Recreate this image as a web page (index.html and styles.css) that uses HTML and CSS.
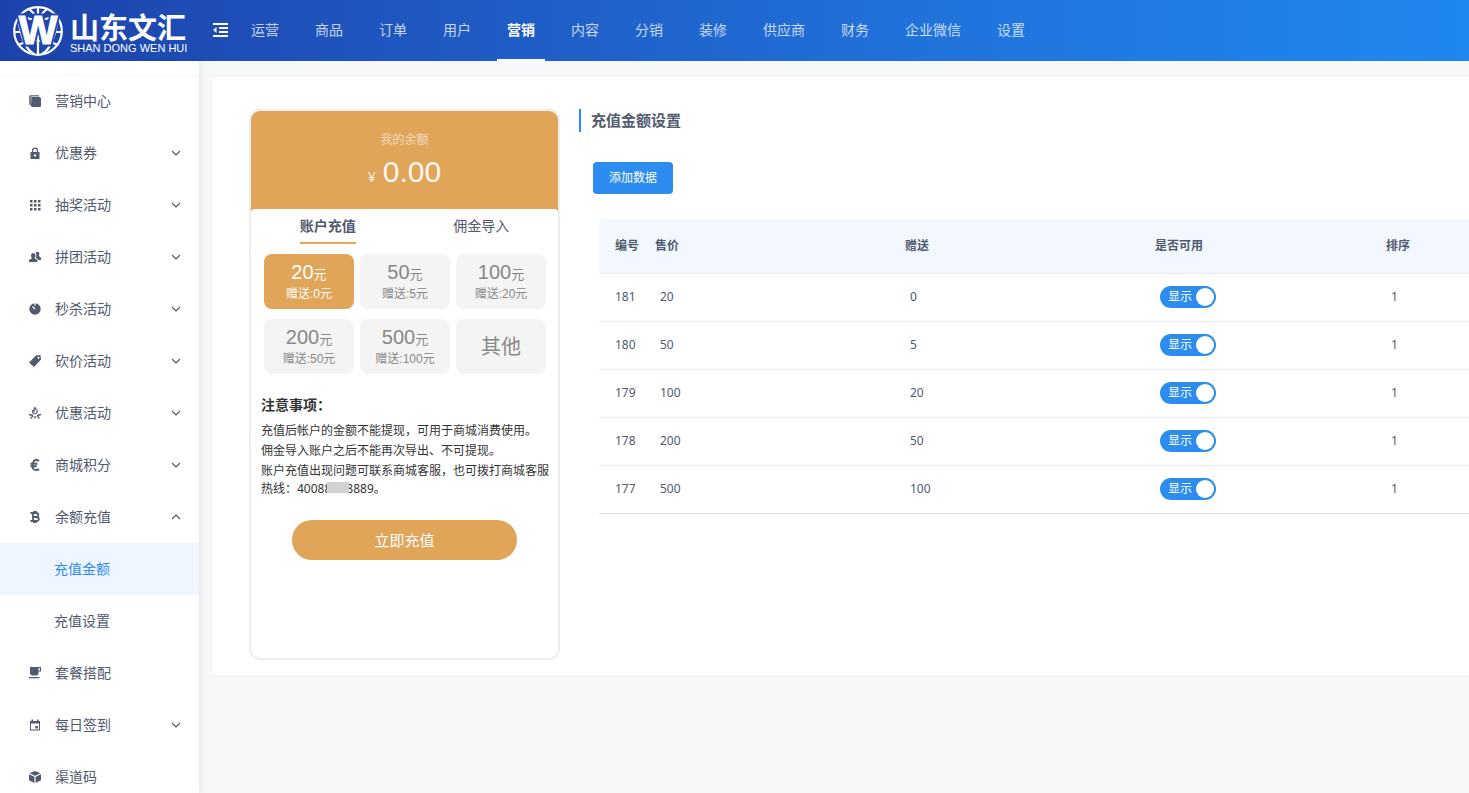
FILE: index.html
```html
<!DOCTYPE html>
<html lang="zh-CN">
<head>
<meta charset="utf-8">
<title>充值金额设置</title>
<link rel="stylesheet" href="styles.css">
</head>
<body>
<header class="topbar">
  <a class="brand" href="#">
    <svg class="brand-mark" viewBox="0 0 50 50" aria-hidden="true">
      <g fill="none" stroke="#fff" stroke-width="2.200">
        <circle cx="25" cy="25" r="23.800"/>
        <path d="M25 1v48M16 3Q22 8 24 12M34 3Q28 8 26 12M7 10q18 7 36 0M1 26h48M6 17Q10 42 21 48M44 17Q40 42 29 48M5 39q20-9 40 0"/>
      </g>
      <text class="mark-halo" x="25" y="38" text-anchor="middle">W</text>
      <text class="mark-letter" x="25" y="38" text-anchor="middle">W</text>
    </svg>
    <span class="brand-text">
      <span class="brand-cn">山东文汇</span>
      <span class="brand-en">SHAN DONG WEN HUI</span>
    </span>
  </a>
  <button class="collapse" aria-label="收起菜单">
    <svg width="16" height="14" viewBox="0 0 16 14" fill="#fff"><path d="M0 0h15v2H0zM6 4h9v2H6zM6 8h9v2H6zM0 12h15v2H0zM0 7l3.500-3v6z"/></svg>
  </button>
  <nav class="topnav">
    <a href="#">运营</a><a href="#">商品</a><a href="#">订单</a><a href="#">用户</a><a class="active" href="#">营销</a><a href="#">内容</a><a href="#">分销</a><a href="#">装修</a><a href="#">供应商</a><a href="#">财务</a><a href="#">企业微信</a><a href="#">设置</a>
  </nav>
</header>
<div class="layout">
  <aside class="sidebar">
    <nav class="menu">
      <a class="item" href="#"><svg class="ico" viewBox="0 0 12 12"><path d="M2.500 2h8q1.500 0 1.500 1.500v7q0 1.500-1.500 1.500h-7Q2 12 2 10.500z"/><path d="M0 9.500V1.500Q0 0 1.500 0h8l1 1.500H2.500L2 10.500z" opacity=".75"/></svg>营销中心</a>
      <a class="item" href="#"><svg class="ico" viewBox="0 0 12 12"><path fill-rule="evenodd" d="M3 5V3.500a3 3 0 0 1 6 0V5h1.500v7h-9V5zm1.200 0h3.600V3.500a1.800 1.800 0 0 0-3.600 0zM6 7.200a1.200 1.200 0 1 0 .01 0z"/></svg>优惠券<svg class="arrow" viewBox="0 0 10 6"><path d="M1 1l4 4 4-4"/></svg></a>
      <a class="item" href="#"><svg class="ico" viewBox="0 0 12 12"><path d="M1 1h2.500v2.500H1zM5 1h2.500v2.500H5zM9 1h2.500v2.500H9zM1 5h2.500v2.500H1zM5 5h2.500v2.500H5zM9 5h2.500v2.500H9zM1 9h2.500v2.500H1zM5 9h2.500v2.500H5zM9 9h2.500v2.500H9z"/></svg>抽奖活动<svg class="arrow" viewBox="0 0 10 6"><path d="M1 1l4 4 4-4"/></svg></a>
      <a class="item" href="#"><svg class="ico" viewBox="0 0 12 12"><path d="M6.500 1.300Q8 .2 9.500 1q1.500 1.500.3 4L12 6.800V9H9.300Q8 7 6.800 7 8 4 6.500 1.300z"/><path d="M4.200 2q2.300 0 2.300 2.500 0 1.500-1 2.700L8.500 9v2H0V9l3-1.800Q2 6 2 4.500 2 2 4.200 2z"/></svg>拼团活动<svg class="arrow" viewBox="0 0 10 6"><path d="M1 1l4 4 4-4"/></svg></a>
      <a class="item" href="#"><svg class="ico" viewBox="0 0 12 12"><circle cx="6" cy="6" r="5.700"/><path d="M6 0v2.500M3.500 3.500l2.500 2.500" stroke="#fff" stroke-width="1.200" fill="none"/></svg>秒杀活动<svg class="arrow" viewBox="0 0 10 6"><path d="M1 1l4 4 4-4"/></svg></a>
      <a class="item" href="#"><svg class="ico" viewBox="0 0 12 12"><path fill-rule="evenodd" d="M7 .5L11.500 0 12 4.500 5 12 0 7.500zM9.500 1.700a1 1 0 1 0 .01 0z"/></svg>砍价活动<svg class="arrow" viewBox="0 0 10 6"><path d="M1 1l4 4 4-4"/></svg></a>
      <a class="item" href="#"><svg class="ico" viewBox="0 0 12 12"><path d="M6 0q-.3 1.500 1.500 2.500Q9 4.500 7.500 6 6.800 6.800 6 6.800 3.500 6.500 3.500 4.500q0-1 1-1.500 0 1 .8 1.200Q4.800 1.500 6 0z" fill="none" stroke="#515a6e" stroke-width="1.100"/><path d="M0 7.500l4 1M12 7.500l-4 1M4 9l-2.500 2.500M8 9l2.500 2.500M6 9v2.500" stroke="#515a6e" stroke-width="1.300"/></svg>优惠活动<svg class="arrow" viewBox="0 0 10 6"><path d="M1 1l4 4 4-4"/></svg></a>
      <a class="item" href="#"><svg class="ico" viewBox="0 0 12 12"><path d="M10 2Q8.800 1 7.300 1 4.200 1 3.600 6t3.700 5Q9 11 10 10M1.500 4.800h7M1.500 7.200h6.300" fill="none" stroke="#515a6e" stroke-width="1.900"/></svg>商城积分<svg class="arrow" viewBox="0 0 10 6"><path d="M1 1l4 4 4-4"/></svg></a>
      <a class="item" href="#"><svg class="ico" viewBox="0 0 12 12"><path d="M1.500 2H7q2.300 0 2.300 2T7 6H4M7 6q2.800 0 2.800 2.100T7 10H1.500M4 2v8M5 0v2M7 0v2M5 10v2M7 10v2" fill="none" stroke="#515a6e" stroke-width="1.800"/></svg>余额充值<svg class="arrow" viewBox="0 0 10 6"><path d="M1 5l4-4 4 4"/></svg></a>
      <a class="sub current" href="#">充值金额</a>
      <a class="sub" href="#">充值设置</a>
      <a class="item" href="#"><svg class="ico" viewBox="0 0 12 12"><path fill-rule="evenodd" d="M1 0h11v4.500H9.500V7L8 8.500H3L1 7zM9.500 1.200v2.300H11V1.200zM0 10h10.500v1.300H0z"/></svg>套餐搭配</a>
      <a class="item" href="#"><svg class="ico" viewBox="0 0 12 12"><path fill-rule="evenodd" d="M1 2h1.500V.500H4V2h4V.500h1.500V2H11v9.500H1zm1 2.500v6h8v-6zM6.300 7h2.700v2.500H6.300z"/></svg>每日签到<svg class="arrow" viewBox="0 0 10 6"><path d="M1 1l4 4 4-4"/></svg></a>
      <a class="item" href="#"><svg class="ico" viewBox="0 0 12 12"><path d="M6 0l5.500 2.300L6 4.800.5 2.300zM0 3.300l5.400 2.500V12L0 9.300zM12 3.300L6.600 5.800V12L12 9.300z"/></svg>渠道码</a>
    </nav>
  </aside>
  <main class="content">
    <div class="panel">
      <section class="phone" aria-label="充值预览">
        <div class="balance">
          <div class="balance-label">我的余额</div>
          <div class="balance-value"><span class="yen">¥</span>0.00</div>
        </div>
        <div class="sheet">
          <div class="tabs">
            <button class="tab on">账户充值</button>
            <button class="tab">佣金导入</button>
          </div>
          <div class="tiles">
            <button class="tile on"><span class="sum">20<small>元</small></span><span class="gift">赠送:0元</span></button>
            <button class="tile"><span class="sum">50<small>元</small></span><span class="gift">赠送:5元</span></button>
            <button class="tile"><span class="sum">100<small>元</small></span><span class="gift">赠送:20元</span></button>
            <button class="tile"><span class="sum">200<small>元</small></span><span class="gift">赠送:50元</span></button>
            <button class="tile"><span class="sum">500<small>元</small></span><span class="gift">赠送:100元</span></button>
            <button class="tile"><span class="other">其他</span></button>
          </div>
          <div class="notes">
            <h3>注意事项：</h3>
            <p>充值后帐户的金额不能提现，可用于商城消费使用。</p>
            <p>佣金导入账户之后不能再次导出、不可提现。</p>
            <p>账户充值出现问题可联系商城客服，也可拨打商城客服热线：40088<span class="mask"></span>8889。</p>
          </div>
          <button class="pay">立即充值</button>
        </div>
      </section>
      <section class="settings">
        <h2>充值金额设置</h2>
        <button class="add">添加数据</button>
        <table class="grid">
          <colgroup><col class="c-id"><col class="c-wide"><col class="c-wide"><col class="c-state"><col></colgroup>
          <thead><tr><th>编号</th><th>售价</th><th>赠送</th><th>是否可用</th><th>排序</th></tr></thead>
          <tbody>
            <tr><td>181</td><td>20</td><td>0</td><td><label class="switch"><input type="checkbox" checked><span>显示</span></label></td><td>1</td></tr>
            <tr><td>180</td><td>50</td><td>5</td><td><label class="switch"><input type="checkbox" checked><span>显示</span></label></td><td>1</td></tr>
            <tr><td>179</td><td>100</td><td>20</td><td><label class="switch"><input type="checkbox" checked><span>显示</span></label></td><td>1</td></tr>
            <tr><td>178</td><td>200</td><td>50</td><td><label class="switch"><input type="checkbox" checked><span>显示</span></label></td><td>1</td></tr>
            <tr><td>177</td><td>500</td><td>100</td><td><label class="switch"><input type="checkbox" checked><span>显示</span></label></td><td>1</td></tr>
          </tbody>
        </table>
      </section>
    </div>
  </main>
</div>
</body>
</html>
```
FILE: styles.css
```css
* { box-sizing: border-box; }
html, body { height: 100%; }
body {
  margin: 0;
  display: flex;
  flex-direction: column;
  overflow: hidden;
  background: #f5f7f9;
  color: #515a6e;
  font: 14px/20px "Noto Sans", "Noto Sans CJK SC", sans-serif;
}
a { color: inherit; text-decoration: none; }
button { border: 0; padding: 0; background: none; color: inherit; font: inherit; cursor: pointer; }
h2, h3, p { margin: 0; }

.topbar {
  flex: none;
  display: flex;
  height: 61px;
  background: linear-gradient(90deg, #1d42ab, #2173dc 65%, #1e88f0);
  color: #fff;
}
.brand { display: flex; align-items: center; width: 199px; padding-left: 13px; gap: 7px; }
.brand-mark { flex: none; width: 50px; height: 50px; }
.mark-letter, .mark-halo { font: bold 41px "Liberation Sans", sans-serif; fill: #fff; }
.mark-letter { stroke: #fff; stroke-width: 1px; }
.mark-halo { stroke: #1e46af; stroke-width: 5px; }
.brand-text { display: flex; flex-direction: column; padding-top: 2px; white-space: nowrap; }
.brand-cn { font: bold 29px/32px "Noto Sans CJK SC", sans-serif; }
.brand-en { font: 11px/12px "Liberation Sans", sans-serif; }
.collapse { display: flex; align-items: center; width: 42px; height: 60px; padding-left: 14px; }
.topnav { display: flex; gap: 16px; }
.topnav a { padding: 0 10px; line-height: 60px; color: rgba(255, 255, 255, .75); white-space: nowrap; }
.topnav .active { color: #fff; font-weight: 700; border-bottom: 2px solid #fff; }

.layout { flex: 1; display: flex; min-height: 0; }
.sidebar {
  flex: none;
  width: 199px;
  padding-top: 14px;
  background: #fff;
  box-shadow: 2px 0 6px rgba(0, 21, 41, .07);
  overflow: hidden;
}
.menu { box-shadow: inset 0 1px #f3f3f4; }
.item { display: flex; align-items: center; height: 52px; padding: 0 18px 0 29px; }
.ico { width: 12px; height: 12px; margin-right: 14px; fill: #515a6e; }
.arrow { width: 10px; height: 6px; margin-left: auto; fill: none; stroke: #515a6e; stroke-width: 1.2; }
.sub { display: flex; align-items: center; height: 52px; padding-left: 54px; }
.sub.current { background: #f0f6ff; color: #2d8cf0; }

.content { flex: 1; min-width: 0; padding: 16px 0 0 14px; }
.panel {
  display: flex;
  gap: 19px;
  padding: 32px 0 15px 36px;
  border-radius: 4px 0 0 4px;
  background: #fff;
}

.phone {
  flex: none;
  width: 311px;
  min-height: 551px;
  border: 2px solid #eee;
  border-radius: 11px;
  overflow: hidden;
}
.balance { padding: 19px 0 21px; background: #e0a559; text-align: center; color: #fff; }
.balance-label { margin-bottom: 2px; font-size: 12px; line-height: 20px; opacity: .6; }
.balance-value { display: flex; justify-content: center; align-items: baseline; gap: 7px; font: 30px/40px "Liberation Sans", sans-serif; opacity: .9; }
.yen { font: 14px/20px "Noto Sans", sans-serif; }
.sheet { margin-top: -4px; border-radius: 4px 4px 0 0; background: #fff; }
.tabs { display: flex; justify-content: space-around; }
.tab { padding: 7px 0 6px; line-height: 20px; border-bottom: 2px solid transparent; }
.tab.on { font-weight: 700; border-color: #e0a559; }
.tiles { display: grid; grid-template-columns: repeat(3, 1fr); gap: 10px 6px; padding: 10px 12px 0 13px; }
.tile {
  display: flex;
  flex-direction: column;
  align-items: center;
  justify-content: center;
  height: 55px;
  border-radius: 8px;
  background: #f4f4f4;
  color: #888;
  font-family: "Liberation Sans", "Noto Sans CJK SC", sans-serif;
}
.tile.on { background: #e0a559; color: #fff; }
.sum { font-size: 20px; line-height: 24px; }
.sum small { font-size: 13px; line-height: 1; }
.gift { font-size: 12px; line-height: 20px; }
.other { font-size: 20px; line-height: 28px; }
.notes { padding: 21px 0 0 10px; color: #333; font-size: 12px; line-height: 18px; }
.notes h3 { margin-bottom: 7px; font-size: 14px; line-height: 20px; }
.notes p { width: 290px; margin-bottom: 2px; }
.mask { display: inline-block; position: relative; width: 22px; height: 11px; margin: 0 -3px 0 -4px; background: #d2d1d3; }
.pay {
  display: block;
  width: 225px;
  height: 40px;
  margin: 22px auto 0;
  border-radius: 20px;
  background: #e0a559;
  color: #fff;
  font-size: 15px;
}

.settings { flex: 1; min-width: 0; font-size: 12px; }
.settings h2 { padding-left: 10px; border-left: 2px solid #1890ff; font-size: 15px; line-height: 23px; font-weight: 700; }
.add { display: block; height: 32px; margin: 30px 0 25px 14px; padding: 0 16px; border-radius: 4px; background: #2d8cf0; color: #fff; }
.grid { width: calc(100% - 20px); margin-left: 20px; border-collapse: collapse; table-layout: fixed; text-align: left; }
.c-id { width: 40px; }
.c-wide { width: 250px; }
.c-state { width: 231px; }
.grid th { height: 54px; padding: 0 0 0 16px; background: #f3f7ff; font-weight: 700; }
.grid td { height: 48px; padding: 0 0 0 21px; }
.grid td:first-child { padding-left: 16px; }
.grid tr { border-bottom: 1px solid #e8eaec; }
.grid tbody tr:last-child { border-color: #dcdee2; }
.switch {
  display: flex;
  align-items: center;
  justify-content: space-between;
  width: 56px;
  height: 22px;
  padding: 0 2px 0 8px;
  border-radius: 11px;
  background: #2d8cf0;
  color: #fff;
}
.switch input { order: 1; appearance: none; width: 18px; height: 18px; margin: 0; border-radius: 50%; background: #fff; }
```
